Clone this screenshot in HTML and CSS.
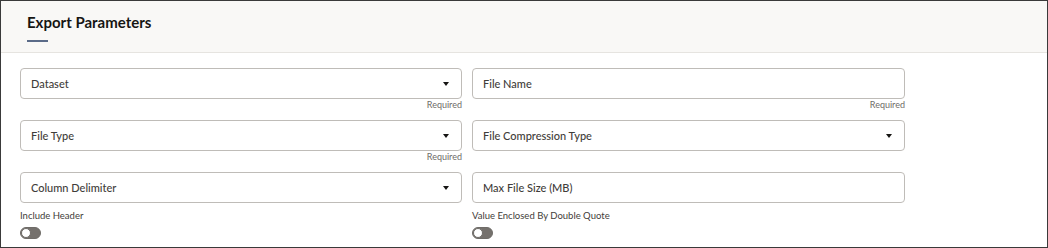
FILE: index.html
```html
<!DOCTYPE html>
<html>
<head>
  <title>Export Parameters</title>
  <link rel="stylesheet" href="styles.css">
</head>
<body>
  <div class="panel">
    <div class="panel-header">
      <h2>Export Parameters</h2>
      <span class="tab-bar"></span>
    </div>

    <div class="form-grid">
      <div class="field">
        <div class="field-box select">Dataset<span class="caret"></span></div>
        <div class="helper">Required</div>
      </div>
      <div class="field">
        <div class="field-box">File Name</div>
        <div class="helper">Required</div>
      </div>

      <div class="field">
        <div class="field-box select">File Type<span class="caret"></span></div>
        <div class="helper">Required</div>
      </div>
      <div class="field">
        <div class="field-box select">File Compression Type<span class="caret"></span></div>
        <div class="helper"></div>
      </div>

      <div class="field">
        <div class="field-box select">Column Delimiter<span class="caret"></span></div>
      </div>
      <div class="field">
        <div class="field-box">Max File Size (MB)</div>
      </div>

      <div class="switch-field">
        <label>Include Header</label>
        <span class="switch"><span class="knob"></span></span>
      </div>
      <div class="switch-field">
        <label>Value Enclosed By Double Quote</label>
        <span class="switch"><span class="knob"></span></span>
      </div>
    </div>
  </div>
</body>
</html>
```

FILE: styles.css
```css
html, body {
  margin: 0;
  padding: 0;
  background: #fff;
}
body {
  font-family: Lato, "Noto Sans", sans-serif;
  color: #161513;
}
.panel {
  width: 1046px;
  height: 246px;
  border: 1px solid #3a3a3a;
  overflow: hidden;
}
.panel-header {
  height: 51px;
  background-color: #f9f8f6;
  border-bottom: 1px solid #e6e4e0;
  padding-left: 26px;
}
.panel-header h2 {
  margin: 0;
  padding-top: 12px;
  font-size: 15px;
  line-height: 18px;
  font-weight: bold;
}
.tab-bar {
  display: block;
  width: 21px;
  height: 2px;
  margin-top: 9px;
  background-color: #5b6b88;
}

/* form */
.form-grid {
  display: grid;
  grid-template-columns: 442px 433px;
  column-gap: 10px;
  padding: 15px 0 0 19px;
}
.field-box {
  position: relative;
  height: 29px;
  line-height: 29px;
  border: 1px solid #bfbcb8;
  border-radius: 4px;
  padding-left: 10px;
  font-size: 11px;
  font-weight: 500;
  color: #3f3d3a;
}
.caret {
  position: absolute;
  right: 12px;
  top: 13px;
  width: 0;
  height: 0;
  border-left: 3px solid transparent;
  border-right: 3px solid transparent;
  border-top: 4px solid #161513;
}
.helper {
  height: 21px;
  line-height: 12px;
  font-size: 9px;
  color: #6f6c68;
  text-align: right;
}

/* switches */
.switch-field {
  padding-top: 7px;
}
.switch-field label {
  display: block;
  font-size: 9.5px;
  line-height: 12px;
  color: #3f3d3a;
}
.switch {
  display: block;
  width: 19px;
  height: 10px;
  margin-top: 5px;
  border: 1px solid #6f6c68;
  border-radius: 6px;
  background-color: #75716d;
  position: relative;
}
.knob {
  position: absolute;
  left: 0;
  top: 0;
  width: 8px;
  height: 8px;
  border: 1px solid #6f6c68;
  border-radius: 50%;
  background-color: #fff;
}
```
